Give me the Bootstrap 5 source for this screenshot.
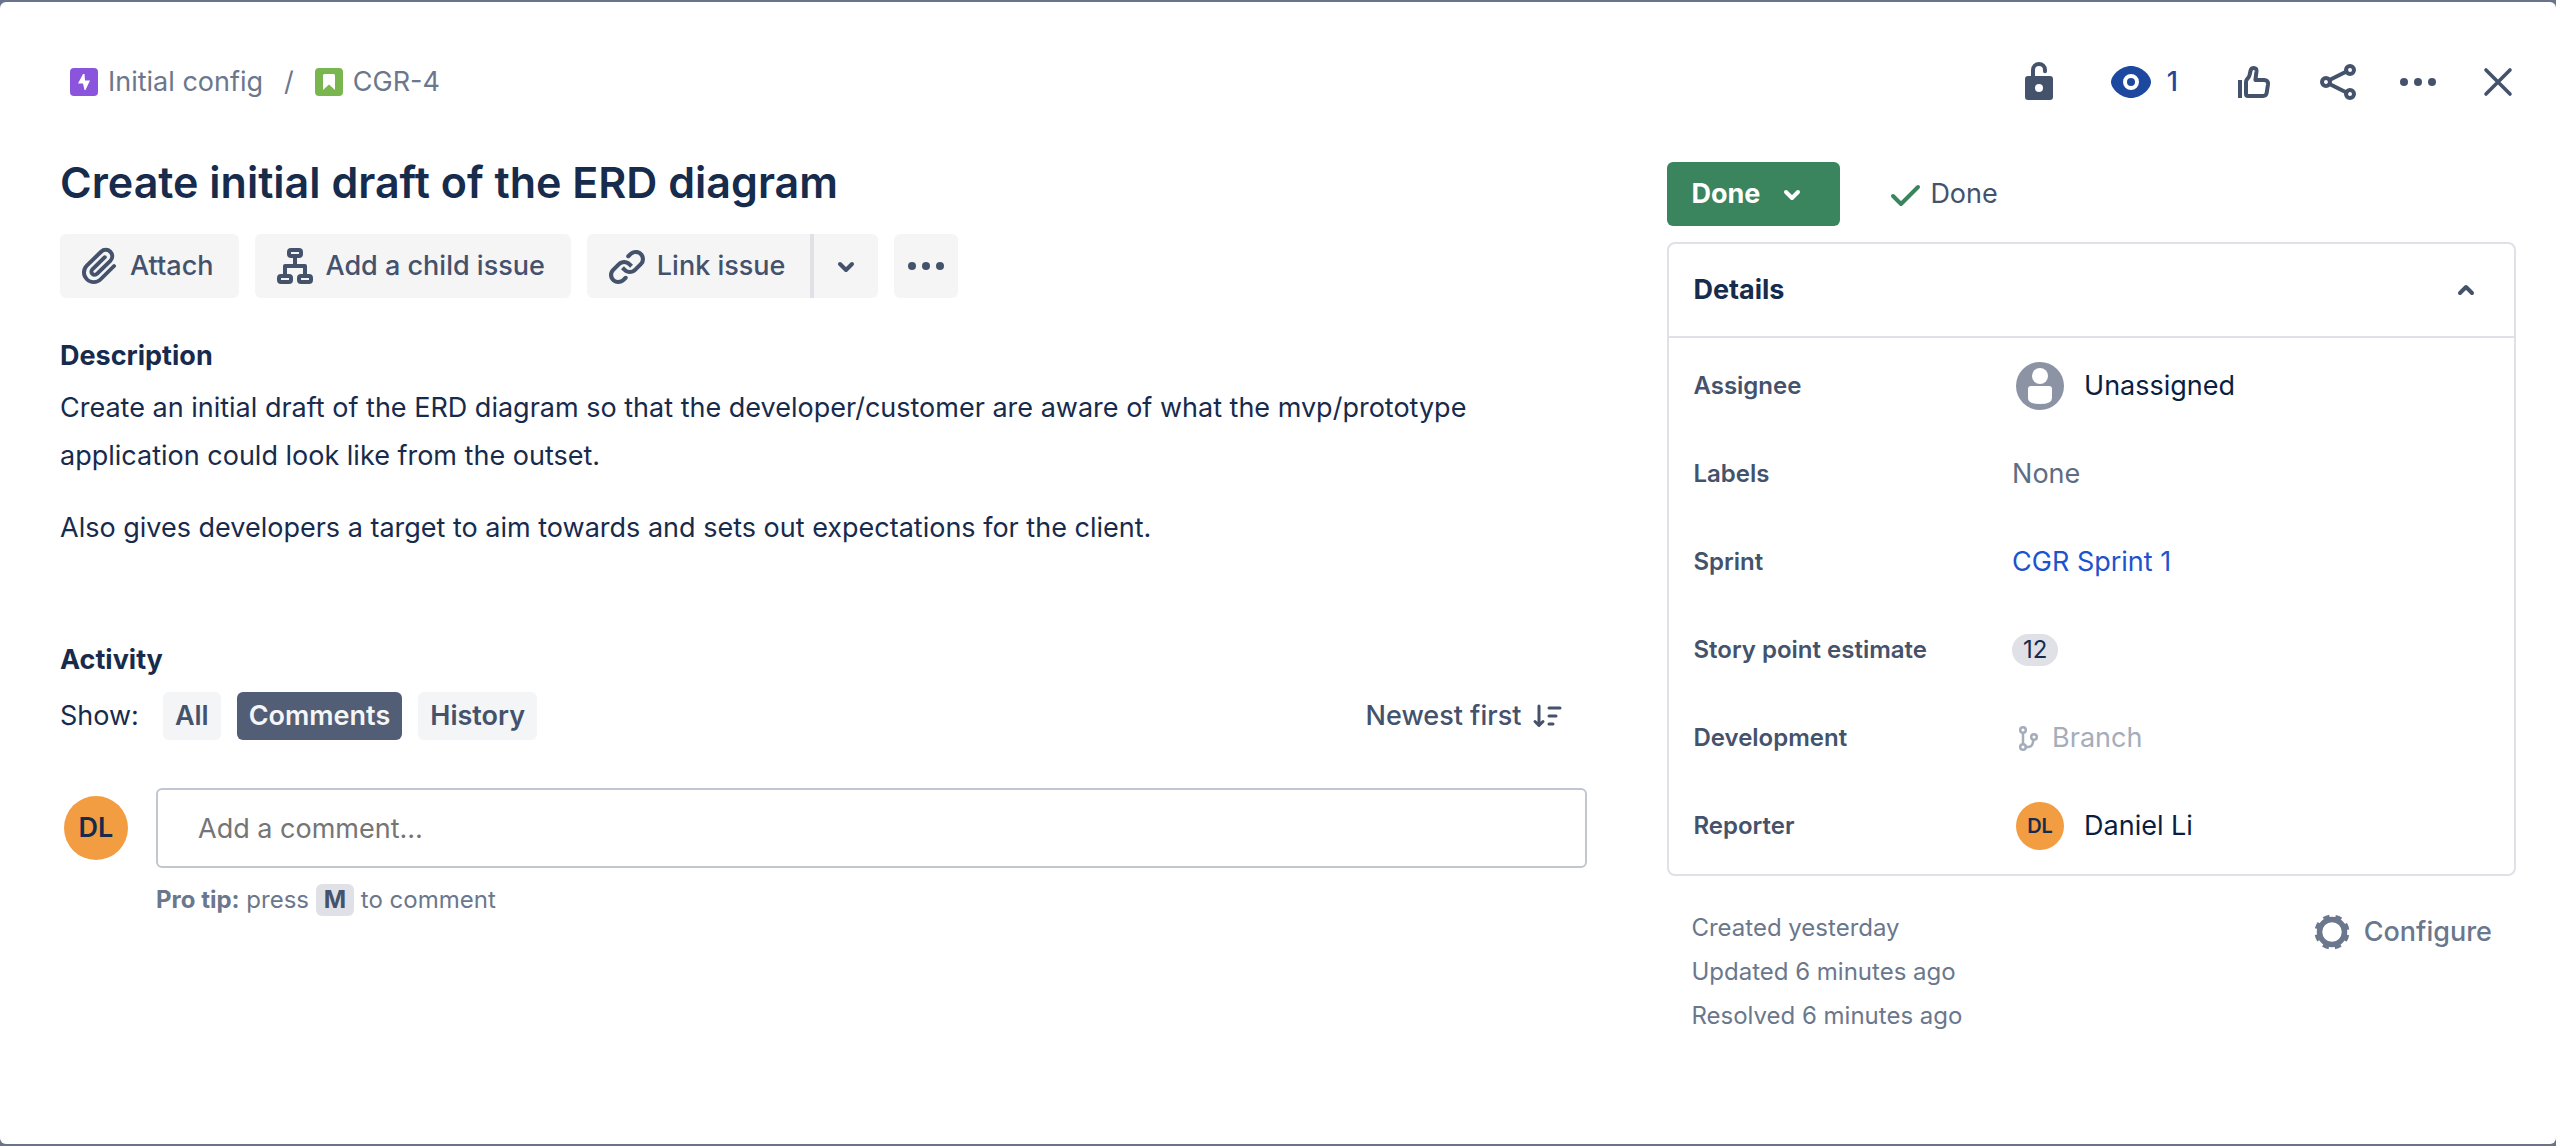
<!DOCTYPE html>
<html lang="en">
<head>
<meta charset="utf-8">
<meta name="viewport" content="width=device-width, initial-scale=1">
<title>CGR-4 Create initial draft of the ERD diagram</title>
<link href="https://cdn.jsdelivr.net/npm/bootstrap@5.3.0/dist/css/bootstrap.min.css" rel="stylesheet">
<style>
  :root { --ink: #172b4d; --slate: #44526c; --muted: #6b778c; --line: #dfe1e6; }
  body { background: #69738a; color: var(--ink); font-family: Inter, "Liberation Sans", sans-serif; font-size: 27px; line-height: 36px; padding: 2px 0; }
  a { text-decoration: none; }
  svg { display: block; flex: none; fill: none; stroke: currentColor; stroke-linecap: round; stroke-linejoin: round; }
  .solid { fill: currentColor; stroke: none; }
  .flat { stroke: none; }
  .issue { background: #fff; border-radius: 6px; min-height: calc(100vh - 4px); padding: 48px 40px 48px 60px; }
  .topbar { margin: 0 -14px 40px 0; }
  .crumbs { color: var(--muted); margin-left: 10px; gap: 10px; }
  .crumbs a { color: inherit; gap: 10px; }
  .crumbs .slash { padding: 0 11px; }
  .tools .btn { width: 64px; height: 64px; }
  .tools .watch { width: auto; color: #1c48a0; gap: 12px; padding: 0 12px; margin: 0 16px 0 8px; }
  .btn { --bs-btn-font-size: 27px; --bs-btn-line-height: 36px; --bs-btn-font-weight: 500; --bs-btn-border-width: 0; --bs-btn-border-radius: 6px; --bs-btn-padding-x: 0; --bs-btn-padding-y: 0; --bs-btn-color: var(--slate); display: inline-flex; align-items: center; justify-content: center; white-space: nowrap; }
  .btn-soft { --bs-btn-bg: #f5f5f6; --bs-btn-hover-bg: #e9eaee; height: 64px; gap: 6px; }
  .btn-text { padding: 0 26px 0 16px; }
  .btn-square { width: 64px; }
  .split .btn:last-child { border-left: 4px solid var(--line); width: 68px; }
  .cols { display: grid; gap: 80px; grid-template-columns: minmax(0, 9fr) minmax(0, 5fr); }
  h1 { font-size: 43px; line-height: 56px; font-weight: 600; margin: 0 0 24px; }
  h2 { font-size: 27px; line-height: 36px; font-weight: 700; margin: 0; }
  .descr { margin: 40px 0 90px; line-height: 48px; }
  .descr h2 { margin-bottom: 10px; }
  .descr p { margin-bottom: 24px; }
  .filters { margin: 14px 0 48px; }
  .chip { --bs-btn-font-weight: 600; --bs-btn-bg: #f4f5f7; --bs-btn-hover-bg: #e9eaee; height: 48px; padding: 0 12px; }
  .chip.on { --bs-btn-color: #f4f5f7; --bs-btn-bg: #525e76; --bs-btn-active-bg: #525e76; }
  .sorter { margin-right: 20px; gap: 6px; }
  .avatar { width: 64px; height: 64px; border-radius: 50%; background: #f29d41; color: var(--ink); font-weight: 600; font-size: 27px; }
  .avatar-sm { width: 48px; height: 48px; font-size: 20px; }
  .composer { gap: 28px; margin-left: 4px; }
  .composer .form-control { height: 80px; padding: 0 40px; border: 2px solid #c1c7d0; border-radius: 6px; font-size: 27px; color: var(--ink); }
  .composer .form-control::placeholder { color: #757575; opacity: 1; }
  .tip { color: var(--muted); font-size: 24px; line-height: 32px; margin: 16px 0 0; }
  .tip strong { font-weight: 700; }
  .tip kbd { display: inline-block; background: var(--line); color: var(--slate); font: inherit; font-weight: 700; border-radius: 6px; padding: 0 8px; }
  .side { padding-top: 8px; }
  .btn-done { --bs-btn-color: #fff; --bs-btn-bg: #3a855d; --bs-btn-hover-color: #fff; --bs-btn-hover-bg: #32734f; --bs-btn-font-weight: 700; height: 64px; padding: 0 24px; gap: 8px; }
  .resolved { color: var(--slate); gap: 6px; }
  .panel { border: 2px solid var(--line); border-radius: 8px; margin: 16px 0 30px; }
  .panel-top { height: 94px; padding: 0 24px; border-bottom: 2px solid var(--line); }
  .fields { margin: 0; padding: 4px 24px; }
  .field { min-height: 88px; }
  .field dt { flex: 0 0 40%; font-size: 24px; font-weight: 600; color: var(--slate); }
  .field dd { margin: 0; display: flex; align-items: center; }
  .field .person { gap: 20px; padding-left: 4px; color: #091e42; }
  .points { background: var(--line); border-radius: 16px; padding: 0 11px; font-size: 24px; line-height: 32px; }
  .stamps { color: var(--muted); font-size: 24px; line-height: 44px; padding: 0 24px; }
  .btn-conf { --bs-btn-color: var(--muted); height: 52px; gap: 12px; }
  .none-set { color: #5e6c84; }
  .sprint { color: #1d53cc; }
  .branch { color: #a5adba; }
  @media (max-width: 1500px) { .cols { grid-template-columns: minmax(0, 1fr); gap: 48px; } }
</style>
</head>
<body>
<main class="issue">
  <header class="topbar d-flex flex-wrap align-items-center justify-content-between">
    <nav class="crumbs d-flex align-items-center" aria-label="Breadcrumb">
      <a href="#" class="d-flex align-items-center">
        <svg class="flat" width="28" height="28" viewBox="0 0 28 28"><rect width="28" height="28" rx="4" fill="#8b54dc"/><path d="M13 6 8 15.500h5L14.500 22h1L20 12.500h-5L14.500 6z" fill="#fff"/></svg>
        Initial config</a>
      <span class="slash">/</span>
      <a href="#" class="d-flex align-items-center">
        <svg class="flat" width="28" height="28" viewBox="0 0 28 28"><rect width="28" height="28" rx="4" fill="#7ab650"/><path d="M9.500 6h9q1.500 0 1.500 1.500V22l-6-5.500L8 22V7.500Q8 6 9.500 6z" fill="#fff"/></svg>
        CGR-4</a>
    </nav>
    <div class="tools d-flex align-items-center gap-3">
      <button type="button" class="btn" aria-label="Restrict access">
        <svg width="48" height="48" viewBox="0 0 48 48"><path d="M18 20v-8a6 6 0 0 1 12 0v1.200" stroke-width="4"/><path fill-rule="evenodd" class="solid" d="M13 18h22q3 0 3 3v18q0 3-3 3H13q-3 0-3-3V21q0-3 3-3zm11 8a4 4 0 1 0 0 8 4 4 0 0 0 0-8z"/></svg>
      </button>
      <button type="button" class="btn watch" aria-label="Watchers">
        <svg width="48" height="48" viewBox="0 0 48 48"><path class="solid" d="M24 8C13.500 8 4 17.500 4 24s9.500 16 20 16 20-9.500 20-16S34.500 8 24 8z"/><circle cx="24" cy="24" r="6" fill="#1c48a0" stroke="#fff" stroke-width="4"/></svg>
        1</button>
      <button type="button" class="btn me-1" aria-label="Vote">
        <svg width="48" height="48" viewBox="0 0 48 48" stroke-width="4"><path d="M10 22v18" stroke-linecap="butt"/><path d="M16 36V24q0-1.500 1-2.800l1.400-1.700q1-1.300 1.300-3l.9-4q.6-2.500 3.200-2.500 3 0 2.700 3.300L25.400 22H34q4.400 0 4 4.300l-1.300 8.500q-.5 3.200-3.700 3.200H18q-2 0-2-2z"/></svg>
      </button>
      <button type="button" class="btn" aria-label="Share">
        <svg width="48" height="48" viewBox="0 0 48 48" stroke-width="4"><circle cx="12" cy="24" r="4"/><circle cx="36" cy="12" r="4"/><circle cx="36" cy="36" r="4"/><path d="m15.500 22 17-8.500M15.500 26l17 8.500"/></svg>
      </button>
      <button type="button" class="btn" aria-label="More">
        <svg width="48" height="48" viewBox="0 0 48 48"><g class="solid"><circle cx="10" cy="24" r="4"/><circle cx="24" cy="24" r="4"/><circle cx="38" cy="24" r="4"/></g></svg>
      </button>
      <button type="button" class="btn" aria-label="Close">
        <svg width="48" height="48" viewBox="0 0 48 48" stroke-width="3.600"><path d="m12 12 24 24M36 12 12 36"/></svg>
      </button>
    </div>
  </header>

  <div class="cols">
    <section>
      <h1>Create initial draft of the ERD diagram</h1>
      <div class="d-flex flex-wrap gap-3">
        <button type="button" class="btn btn-soft btn-text">
          <svg width="48" height="48" viewBox="0 0 24 24"><path class="solid" d="M11.643 17.965c-1.530 1.495-4.016 1.496-5.542.004a3.773 3.773 0 0 1 .002-5.412l7.147-6.985a2.316 2.316 0 0 1 3.233-.003c.893.873.895 2.282.004 3.154l-6.703 6.550a.653.653 0 0 1-.914-.008.620.620 0 0 1 0-.902l6.229-6.087a.941.941 0 0 0 0-1.353.995.995 0 0 0-1.384 0l-6.230 6.087a2.502 2.502 0 0 0 0 3.607 2.643 2.643 0 0 0 3.683.009l6.703-6.550a4.176 4.176 0 0 0-.003-5.960 4.306 4.306 0 0 0-6.002.004L4.720 11.103a5.634 5.634 0 0 0-.002 8.118 5.869 5.869 0 0 0 8.307-.003l6.700-6.547a.940.940 0 0 0 0-1.353.995.995 0 0 0-1.384 0z"/></svg>
          Attach</button>
        <button type="button" class="btn btn-soft btn-text">
          <svg width="48" height="48" viewBox="0 0 48 48" stroke-width="4"><rect x="18" y="8" width="12" height="6" rx="2"/><rect x="8" y="34" width="12" height="6" rx="2"/><rect x="28" y="34" width="12" height="6" rx="2"/><path d="M24 14v10M14 34V24h20v10"/></svg>
          Add a child issue</button>
        <div class="split btn-group">
          <button type="button" class="btn btn-soft btn-text">
            <svg width="48" height="48" viewBox="0 0 24 24"><path class="solid" d="m12.856 5.457-.937.920a1.002 1.002 0 0 0 0 1.437 1.047 1.047 0 0 0 1.463 0l.984-.966c.967-.950 2.542-1.135 3.602-.288a2.540 2.540 0 0 1 .203 3.810l-2.903 2.852a2.646 2.646 0 0 1-3.696 0l-1.110-1.090L9 13.570l1.108 1.089c1.822 1.788 4.802 1.788 6.622 0l2.905-2.852a4.558 4.558 0 0 0-.357-6.820c-1.893-1.517-4.695-1.226-6.422.470z"/><path class="solid" d="m11.144 19.543.937-.920a1.002 1.002 0 0 0 0-1.437 1.047 1.047 0 0 0-1.462 0l-.985.966c-.967.950-2.542 1.135-3.602.288a2.540 2.540 0 0 1-.203-3.810l2.903-2.852a2.646 2.646 0 0 1 3.696 0l1.110 1.090L15 11.430l-1.108-1.089c-1.822-1.788-4.802-1.788-6.622 0l-2.905 2.852a4.558 4.558 0 0 0 .357 6.820c1.893 1.517 4.695 1.226 6.422-.470z"/></svg>
            Link issue</button>
          <button type="button" class="btn btn-soft" aria-label="More link options">
            <svg width="48" height="48" viewBox="0 0 48 48" stroke-width="4"><path d="m18 22 6 6 6-6"/></svg>
          </button>
        </div>
        <button type="button" class="btn btn-soft btn-square" aria-label="More actions">
          <svg width="48" height="48" viewBox="0 0 48 48"><g class="solid"><circle cx="10" cy="24" r="4"/><circle cx="24" cy="24" r="4"/><circle cx="38" cy="24" r="4"/></g></svg>
        </button>
      </div>

      <div class="descr">
        <h2>Description</h2>
        <p>Create an initial draft of the ERD diagram so that the developer/customer are aware of what the mvp/prototype application could look like from the outset.</p>
        <p class="mb-0">Also gives developers a target to aim towards and sets out expectations for the client.</p>
      </div>

      <h2>Activity</h2>
      <div class="filters d-flex flex-wrap align-items-center justify-content-between">
        <div class="d-flex align-items-center gap-3">
          <span class="pe-2">Show:</span>
          <button type="button" class="btn chip">All</button>
          <button type="button" class="btn chip on" aria-pressed="true">Comments</button>
          <button type="button" class="btn chip">History</button>
        </div>
        <button type="button" class="btn sorter">Newest first
          <svg width="40" height="40" viewBox="0 0 40 40" stroke-width="3"><path d="M12 10v19M8 25.500l4 4 4-4M22 12h11M22 20h7M22 28h4"/></svg>
        </button>
      </div>
      <div class="composer d-flex">
        <div class="avatar d-flex align-items-center justify-content-center flex-shrink-0 mt-2">DL</div>
        <div class="flex-grow-1">
          <input type="text" class="form-control" placeholder="Add a comment…" aria-label="Add a comment">
          <p class="tip"><strong>Pro tip:</strong> press <kbd>M</kbd> to comment</p>
        </div>
      </div>
    </section>

    <aside class="side">
      <div class="d-flex align-items-center">
        <button type="button" class="btn btn-done">Done
          <svg width="48" height="48" viewBox="0 0 48 48" stroke-width="4"><path d="m18 22 6 6 6-6"/></svg>
        </button>
        <div class="resolved d-flex align-items-center ms-5">
          <svg width="36" height="36" viewBox="0 0 36 36"><path d="m5 20 8 8 17-17" stroke="#3a855d" stroke-width="4"/></svg>
          Done</div>
      </div>
      <div class="panel">
        <div class="panel-top d-flex align-items-center justify-content-between">
          <h2>Details</h2>
          <button type="button" class="btn" aria-label="Collapse details">
            <svg width="48" height="48" viewBox="0 0 48 48" stroke-width="4"><path d="m18 27 6-6 6 6"/></svg>
          </button>
        </div>
        <dl class="fields">
          <div class="field d-flex align-items-center"><dt>Assignee</dt>
            <dd class="person">
              <svg class="flat" width="48" height="48" viewBox="0 0 48 48"><circle cx="24" cy="24" r="24" fill="#8c93a4"/><circle cx="24" cy="14" r="8" fill="#fff"/><path d="M15 24h18q3 0 3 3v9q0 6-12 6t-12-6v-9q0-3 3-3z" fill="#fff"/></svg>
              Unassigned</dd></div>
          <div class="field d-flex align-items-center"><dt>Labels</dt><dd class="none-set">None</dd></div>
          <div class="field d-flex align-items-center"><dt>Sprint</dt><dd><a href="#" class="sprint">CGR Sprint 1</a></dd></div>
          <div class="field d-flex align-items-center"><dt>Story point estimate</dt><dd><span class="points">12</span></dd></div>
          <div class="field d-flex align-items-center"><dt>Development</dt>
            <dd class="branch">
              <svg width="40" height="32" viewBox="0 0 40 32" stroke-width="2.500"><circle cx="11" cy="8" r="2.800"/><circle cx="11" cy="25" r="2.800"/><circle cx="22" cy="15" r="2.800"/><path d="M11 11v11M14 25h2q4 0 4.800-4l.6-3"/></svg>
              Branch</dd></div>
          <div class="field d-flex align-items-center"><dt>Reporter</dt>
            <dd class="person"><div class="avatar avatar-sm d-flex align-items-center justify-content-center">DL</div>Daniel Li</dd></div>
        </dl>
      </div>
      <div class="stamps d-flex justify-content-between align-items-start">
        <div>
          <div>Created yesterday</div>
          <div>Updated 6 minutes ago</div>
          <div>Resolved 6 minutes ago</div>
        </div>
        <button type="button" class="btn btn-conf">
          <svg width="40" height="40" viewBox="0 0 40 40"><circle cx="20" cy="20" r="12.500" stroke-width="5.500"/><circle cx="20" cy="20" r="15.500" stroke-width="4" stroke-linecap="butt" stroke-dasharray="6.170 6.004" stroke-dashoffset="-3"/></svg>
          Configure</button>
      </div>
    </aside>
  </div>
</main>
<script src="https://cdn.jsdelivr.net/npm/bootstrap@5.3.0/dist/js/bootstrap.bundle.min.js"></script>
</body>
</html>
